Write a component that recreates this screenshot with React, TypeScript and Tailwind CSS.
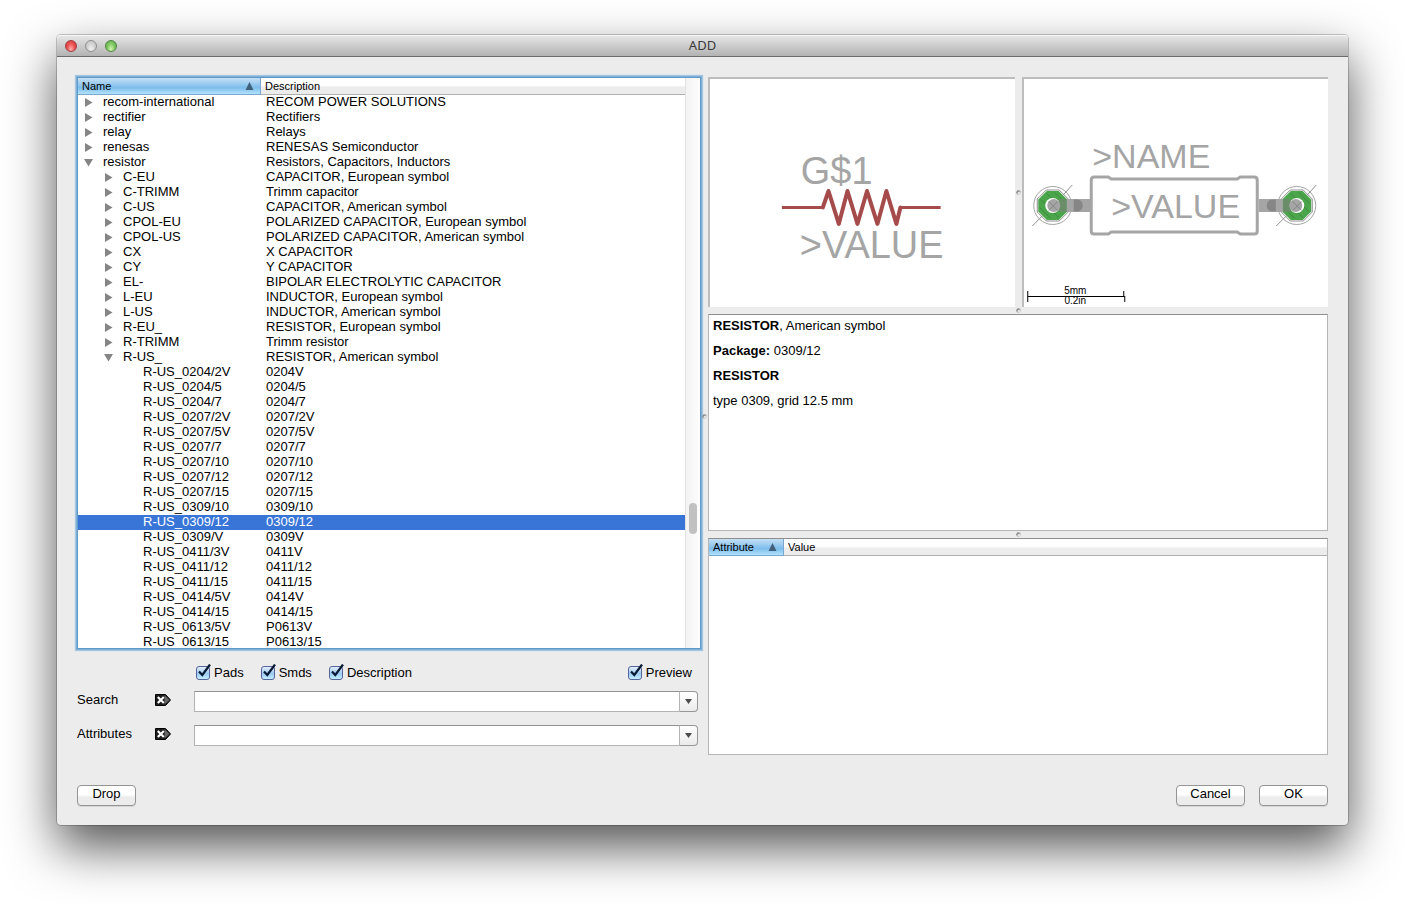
import { useState } from "react";
import clsx from "clsx";

type TreeRow = {
  name: string;
  description: string;
  level: 0 | 1 | 2;
  open?: boolean;
};

const rows: TreeRow[] = [
  { name: "recom-international", description: "RECOM POWER SOLUTIONS", level: 0 },
  { name: "rectifier", description: "Rectifiers", level: 0 },
  { name: "relay", description: "Relays", level: 0 },
  { name: "renesas", description: "RENESAS Semiconductor", level: 0 },
  { name: "resistor", description: "Resistors, Capacitors, Inductors", level: 0, open: true },
  { name: "C-EU", description: "CAPACITOR, European symbol", level: 1 },
  { name: "C-TRIMM", description: "Trimm capacitor", level: 1 },
  { name: "C-US", description: "CAPACITOR, American symbol", level: 1 },
  { name: "CPOL-EU", description: "POLARIZED CAPACITOR, European symbol", level: 1 },
  { name: "CPOL-US", description: "POLARIZED CAPACITOR, American symbol", level: 1 },
  { name: "CX", description: "X CAPACITOR", level: 1 },
  { name: "CY", description: "Y CAPACITOR", level: 1 },
  { name: "EL-", description: "BIPOLAR ELECTROLYTIC CAPACITOR", level: 1 },
  { name: "L-EU", description: "INDUCTOR, European symbol", level: 1 },
  { name: "L-US", description: "INDUCTOR, American symbol", level: 1 },
  { name: "R-EU_", description: "RESISTOR, European symbol", level: 1 },
  { name: "R-TRIMM", description: "Trimm resistor", level: 1 },
  { name: "R-US_", description: "RESISTOR, American symbol", level: 1, open: true },
  { name: "R-US_0204/2V", description: "0204V", level: 2 },
  { name: "R-US_0204/5", description: "0204/5", level: 2 },
  { name: "R-US_0204/7", description: "0204/7", level: 2 },
  { name: "R-US_0207/2V", description: "0207/2V", level: 2 },
  { name: "R-US_0207/5V", description: "0207/5V", level: 2 },
  { name: "R-US_0207/7", description: "0207/7", level: 2 },
  { name: "R-US_0207/10", description: "0207/10", level: 2 },
  { name: "R-US_0207/12", description: "0207/12", level: 2 },
  { name: "R-US_0207/15", description: "0207/15", level: 2 },
  { name: "R-US_0309/10", description: "0309/10", level: 2 },
  { name: "R-US_0309/12", description: "0309/12", level: 2 },
  { name: "R-US_0309/V", description: "0309V", level: 2 },
  { name: "R-US_0411/3V", description: "0411V", level: 2 },
  { name: "R-US_0411/12", description: "0411/12", level: 2 },
  { name: "R-US_0411/15", description: "0411/15", level: 2 },
  { name: "R-US_0414/5V", description: "0414V", level: 2 },
  { name: "R-US_0414/15", description: "0414/15", level: 2 },
  { name: "R-US_0613/5V", description: "P0613V", level: 2 },
  { name: "R-US_0613/15", description: "P0613/15", level: 2 },
];

const indent = ["pl-[6px]", "pl-[26px]", "pl-[46px]"];

const plainHeader = "bg-linear-to-b from-white from-50% to-[#ececec] to-55% border-b border-[#b0b0b0]";
const sortedHeader =
  "bg-linear-to-b from-[#c5e0f4] via-[#7dbdec] via-60% to-[#b2e2fb] border-b border-r border-[#7ba7d3]";

function SortArrow() {
  return (
    <svg width="9" height="8" viewBox="0 0 9 8" className="mb-px shrink-0">
      <path d="M4.5 0 L8.5 8 H0.5 Z" fill="#41607c" />
    </svg>
  );
}

function Disclosure({ open }: { open?: boolean }) {
  return (
    <svg width="9" height="9" viewBox="0 0 9 9" className="shrink-0">
      <path d={open ? "M0 1 H9 L4.5 8.5 Z" : "M1 0 L8.5 4.5 L1 9 Z"} fill="#858585" />
    </svg>
  );
}

function SplitHandle() {
  return (
    <svg width="5" height="5" viewBox="0 0 5 5" className="shrink-0">
      <circle cx="2.5" cy="2.5" r="2.2" fill="#868686" />
      <circle cx="3.2" cy="3.3" r="1.7" fill="#e2e2e2" />
    </svg>
  );
}

function Tree() {
  const [selected, setSelected] = useState("R-US_0309/12");

  return (
    <div className="flex h-[572px] overflow-hidden border border-[#6199c9] bg-white shadow-[0_0_0_1px_#7fb0d8,0_0_1px_2px_#a3c6e2]">
      <div className="min-w-0 flex-1">
        <table className="w-full table-fixed border-separate border-spacing-0 text-left">
          <colgroup>
            <col className="w-[183px]" />
            <col />
          </colgroup>
          <thead className="text-[11px] leading-4">
            <tr>
              <th className={clsx("p-0 font-normal", sortedHeader)}>
                <div className="flex items-center justify-between pl-1 pr-[6px]">
                  Name
                  <SortArrow />
                </div>
              </th>
              <th className={clsx("py-0 pl-1 pr-0 font-normal", plainHeader)}>Description</th>
            </tr>
          </thead>
          <tbody className="text-[13px] leading-[13px]">
            {rows.map((row) => (
              <tr
                key={row.name}
                onClick={() => setSelected(row.name)}
                className={clsx(selected === row.name && "bg-[#3875d7] text-white")}
              >
                <td className="p-0">
                  <div className={clsx("flex h-[15px] gap-[10px] whitespace-nowrap", indent[row.level])}>
                    <span className="flex w-[9px] items-center">
                      {row.level < 2 && <Disclosure open={row.open} />}
                    </span>
                    <span>{row.name}</span>
                  </div>
                </td>
                <td className="whitespace-nowrap pb-[2px] pl-[5px] pr-0 pt-0">{row.description}</td>
              </tr>
            ))}
          </tbody>
        </table>
      </div>
      {/* Scrollbar */}
      <div className="flex w-[15px] flex-col items-center border-l border-[#e2e2e2] bg-linear-to-r from-[#f3f3f3] to-[#fdfdfd] pt-[425px]">
        <div className="h-[31px] w-2 rounded-full bg-[#c1c1c1]" />
      </div>
    </div>
  );
}

function CheckBox({ label }: { label: string }) {
  return (
    <label className="flex items-center gap-1">
      <span className="relative flex">
        <input
          type="checkbox"
          defaultChecked
          className="peer h-[14px] w-[14px] appearance-none rounded-[3px] border border-[#56639c] bg-linear-to-b from-[#e4eefa] via-[#9ccaf3] via-55% to-[#c3f0ff]"
        />
        <svg
          width="16"
          height="16"
          viewBox="0 0 16 16"
          className="pointer-events-none absolute -top-[2px] left-0 hidden peer-checked:block"
        >
          <path d="M3 7.5 L6.3 11 L14 0.5" fill="none" stroke="#0a1a33" strokeWidth="2.2" />
        </svg>
      </span>
      <span className="-mt-[2px]">{label}</span>
    </label>
  );
}

function SearchRow({ id, label }: { id: string; label: string }) {
  return (
    <div className="flex h-[21px] items-center pr-[3px]">
      <label htmlFor={id} className="w-[78px] pb-1">
        {label}
      </label>
      <button type="button" aria-label={`Clear ${label}`} className="mr-[23px] pb-[3px]">
        <svg width="16" height="12" viewBox="0 0 16 12">
          <path d="M0.5 0.5 H10.5 L15.5 6 L10.5 11.5 H0.5 Z" fill="#1c1c1c" stroke="#000" />
          <path d="M9.5 1 L14.5 6 L9.5 10.5 Z" fill="#666" />
          <path d="M2.8 3 L8.8 9 M8.8 3 L2.8 9" stroke="#fff" strokeWidth="2.2" />
        </svg>
      </button>
      <input
        id={id}
        type="text"
        className="h-[21px] min-w-0 flex-1 border border-[#b3b3b3] border-t-[#929292] bg-white px-1 outline-none"
      />
      <button
        type="button"
        aria-label={`${label} history`}
        className="flex h-[21px] w-[18px] items-center justify-center rounded-r-[4px] border border-l-0 border-[#979797] bg-linear-to-b from-white to-[#ebebeb]"
      >
        <svg width="7" height="5" viewBox="0 0 7 5">
          <path d="M0 0 H7 L3.5 5 Z" fill="#4c4c4c" />
        </svg>
      </button>
    </div>
  );
}

function PushButton({ children, className }: { children: string; className: string }) {
  return (
    <button
      type="button"
      className={clsx(
        "h-[21px] rounded-[4px] border border-[#949494] bg-linear-to-b from-white from-45% to-[#ececec] to-60% pb-[3px] leading-4 shadow-[0_1px_0_#d6d6d6]",
        className
      )}
    >
      {children}
    </button>
  );
}

function SymbolPreview() {
  return (
    <svg viewBox="0 0 305 228" className="h-full w-full font-['Liberation_Sans',Arial,sans-serif]">
      <g fill="#a5a5a5" fontSize="38">
        <text x="91" y="105">G$1</text>
        <text x="90" y="179">&gt;VALUE</text>
      </g>
      <g fill="none" stroke="#a54b4b" strokeLinejoin="round">
        <path d="M72 128.5 H113 M191 128.5 H231" strokeWidth="3" />
        <path
          d="M113 128.5 L118.7 112 L129 145 L137.7 112 L147.7 145 L157.3 112 L167.7 145 L176.7 112 L186.7 145 L190.7 128.5"
          strokeWidth="4"
          strokeLinecap="round"
        />
      </g>
    </svg>
  );
}

function Pad({ cx, lead }: { cx: number; lead: 1 | -1 }) {
  return (
    <g transform={`translate(${cx} 126.5)`}>
      <path d="M-6 -14.5 H6 L14.5 -6 V6 L6 14.5 H-6 L-14.5 6 V-6 Z" fill="#4ba54b" />
      <path d="M-6.5 -15.5 H6.5 L15.5 -6.5 V6.5 L6.5 15.5 H-6.5 L-15.5 6.5 V-6.5 Z" fill="none" stroke="#8f8f8f" />
      <path d="M-12 -6 L6 12 M-6 -12 L12 6 M-13 2 L-2 13 M2 -13 L13 -2" stroke="#3c8a3c" />
      <circle r="7.5" fill="#fff" />
      <g transform={`scale(${lead} 1)`}>
        <path d="M6 -6.5 H14 V6.5 H6 Z" fill="#6f8a6f" fillOpacity="0.85" />
        <path d="M14 -6.5 H38 V6.5 H14 Z" fill="#a5a5a5" />
        <path d="M21 -6 H25 Q30 -5 30 0 Q30 5 25 6 H21 Z" fill="#868686" />
      </g>
      <circle cx={lead} r="6.5" fill="#a5a5a5" />
      <path d="M-4 -4 L5 5 M-4 5 L5 -4" stroke="#868686" />
      <circle r="19" fill="none" stroke="#a5a5a5" />
      <path d="M-20.5 20.5 L-10 10 M10 -10 L19.5 -20.5" stroke="#8f8f8f" />
    </g>
  );
}

function PackagePreview() {
  return (
    <svg viewBox="0 0 304 228" className="h-full w-full font-['Liberation_Sans',Arial,sans-serif]">
      <Pad cx={28.5} lead={1} />
      <Pad cx={272.5} lead={-1} />
      <path
        d="M70 98 H84 L87 100 H213 L216 98 H230 Q233 98 233 101 V152 Q233 155 230 155 H216 L213 153 H87 L84 155 H70 Q67 155 67 152 V101 Q67 98 70 98 Z"
        fill="#fff"
        stroke="#a5a5a5"
        strokeWidth="3"
      />
      <g fill="#a5a5a5" fontSize="34">
        <text x="68" y="89">&gt;NAME</text>
        <text x="87" y="139">&gt;VALUE</text>
      </g>
      <path d="M3.5 212 V223 M3.5 217.5 H100.5 M99.5 212 V217 M100.5 217 V223" stroke="#000" fill="none" />
      <g fill="#000" fontSize="10" textAnchor="middle">
        <text x="51" y="215">5mm</text>
        <text x="51" y="225">0.2in</text>
      </g>
    </svg>
  );
}

function TitleBar() {
  return (
    <header className="grid h-[22px] grid-cols-[1fr_auto_1fr] items-center rounded-t-[4px] border-b border-[#6a6a6a] bg-linear-to-b from-[#e8e8e8] to-[#b3b3b3] px-2 shadow-[inset_0_1px_0_#f6f6f6]">
      <div className="flex gap-2">
        <button
          type="button"
          aria-label="Close"
          className="h-3 w-3 rounded-full border border-[#a13a3c] bg-radial-[at_50%_85%] from-[#ffb4b0] via-[#ee5555] to-[#c23338]"
        />
        <button
          type="button"
          aria-label="Minimize"
          className="h-3 w-3 rounded-full border border-[#8e8e8e] bg-radial-[at_50%_85%] from-[#f2f2f2] via-[#d4d4d4] to-[#bdbdbd]"
        />
        <button
          type="button"
          aria-label="Zoom"
          className="h-3 w-3 rounded-full border border-[#4d8640] bg-radial-[at_50%_85%] from-[#d5f7b4] via-[#83cb66] to-[#59a045]"
        />
      </div>
      <h1 className="pb-px font-['Noto_Sans',sans-serif] text-[13px] leading-5 text-[#3a3a3a]">ADD</h1>
    </header>
  );
}

export default function App() {
  return (
    <div className="min-h-screen overflow-hidden bg-white px-[57px] pb-[79px] pt-[35px] font-['Liberation_Sans',Arial,sans-serif] text-[13px] leading-[15px] text-black">
      <main className="rounded-[4px] bg-[#ececec] shadow-[0_0_0_1px_rgba(0,0,0,0.2),0_22px_50px_rgba(0,0,0,0.68)]">
        <TitleBar />

        <div className="px-5 pb-[19px] pt-5">
          <div className="flex">
            {/* Library tree and filters */}
            <section className="min-w-0 flex-[624]">
              <Tree />
              <div className="mt-[17px] flex items-center gap-[17px] pl-[119px] pr-[9px]">
                <CheckBox label="Pads" />
                <CheckBox label="Smds" />
                <CheckBox label="Description" />
                <div className="ml-auto">
                  <CheckBox label="Preview" />
                </div>
              </div>
              <div className="mt-[11px] flex flex-col gap-[13px]">
                <SearchRow id="search" label="Search" />
                <SearchRow id="attributes" label="Attributes" />
              </div>
            </section>

            <div className="flex w-[7px] items-center justify-center">
              <SplitHandle />
            </div>

            {/* Previews and details */}
            <section className="flex min-w-0 flex-[620] flex-col">
              <div className="flex h-[230px]">
                <div className="min-w-0 flex-1 border-l-2 border-t-2 border-[#bdbdbd] bg-white">
                  <SymbolPreview />
                </div>
                <div className="flex w-[7px] items-center justify-center">
                  <SplitHandle />
                </div>
                <div className="min-w-0 flex-1 border-l-2 border-t-2 border-[#bdbdbd] bg-white">
                  <PackagePreview />
                </div>
              </div>

              <div className="flex h-[7px] items-center justify-center">
                <SplitHandle />
              </div>

              <div className="flex h-[217px] flex-col gap-[10px] border border-[#b5b5b5] border-t-[#8e8e8e] bg-white px-1 pt-[3px]">
                <p>
                  <b>RESISTOR</b>, American symbol
                </p>
                <p>
                  <b>Package:</b> 0309/12
                </p>
                <p>
                  <b>RESISTOR</b>
                </p>
                <p>type 0309, grid 12.5 mm</p>
              </div>

              <div className="flex h-[7px] items-center justify-center">
                <SplitHandle />
              </div>

              <div className="h-[217px] border border-[#b5b5b5] border-t-[#8e8e8e] bg-white">
                <table className="w-full table-fixed border-separate border-spacing-0 text-left text-[11px] leading-4">
                  <colgroup>
                    <col className="w-[75px]" />
                    <col />
                  </colgroup>
                  <thead>
                    <tr>
                      <th className={clsx("p-0 font-normal", sortedHeader)}>
                        <div className="flex items-center justify-between pl-1 pr-[6px]">
                          Attribute
                          <SortArrow />
                        </div>
                      </th>
                      <th className={clsx("py-0 pl-1 pr-0 font-normal", plainHeader)}>Value</th>
                    </tr>
                  </thead>
                </table>
              </div>
            </section>
          </div>

          <footer className="mt-[30px] flex gap-[14px]">
            <PushButton className="w-[59px]">Drop</PushButton>
            <PushButton className="ml-auto w-[69px]">Cancel</PushButton>
            <PushButton className="w-[69px]">OK</PushButton>
          </footer>
        </div>
      </main>
    </div>
  );
}
